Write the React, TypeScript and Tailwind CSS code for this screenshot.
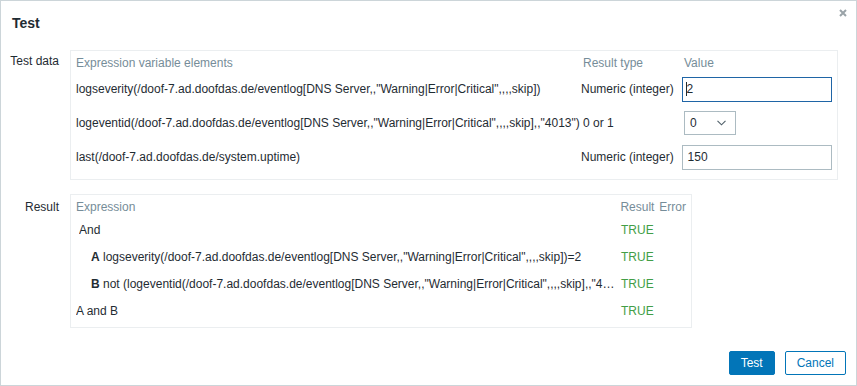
import React from "react";

const font = { fontFamily: '"Liberation Sans", Arial, sans-serif' };

const vars = [
  {
    expr: 'logseverity(/doof-7.ad.doofdas.de/eventlog[DNS Server,,"Warning|Error|Critical",,,,skip])',
    type: "Numeric (integer)",
    kind: "input",
    value: "2",
    focused: true,
  },
  {
    expr: 'logeventid(/doof-7.ad.doofdas.de/eventlog[DNS Server,,"Warning|Error|Critical",,,,skip],,"4013")',
    type: "0 or 1",
    kind: "select",
    value: "0",
  },
  {
    expr: "last(/doof-7.ad.doofdas.de/system.uptime)",
    type: "Numeric (integer)",
    kind: "input",
    value: "150",
  },
];

function Chevron() {
  return (
    <svg width="9" height="6" viewBox="0 0 9 6" fill="none">
      <path d="M0.5 0.8 L4.5 4.8 L8.5 0.8" stroke="#4f5f69" strokeWidth="1.1" />
    </svg>
  );
}

function ValueField({ row }: { row: (typeof vars)[number] }) {
  if (row.kind === "select") {
    return (
      <div className="flex h-[24px] w-[52px] items-center justify-between border border-[#acbbc2] bg-white pl-[5px] pr-[9px] text-[#1f2c33]">
        <span>{row.value}</span>
        <Chevron />
      </div>
    );
  }
  return (
    <div
      className={
        row.focused
          ? "flex h-[25px] w-[151px] items-center border border-[#1f65a6] bg-white pl-[3px] text-[#1f2c33]"
          : "flex h-[25px] w-[151px] items-center border border-[#acbbc2] bg-white pl-[5px] text-[#1f2c33]"
      }
    >
      {row.focused && <span className="inline-block h-[14px] w-px bg-[#1f2c33]" />}
      <span>{row.value}</span>
    </div>
  );
}

const results = [
  { lead: "", text: "And", indent: "pl-[3px]" },
  {
    lead: "A",
    text: ' logseverity(/doof-7.ad.doofdas.de/eventlog[DNS Server,,"Warning|Error|Critical",,,,skip])=2',
    indent: "pl-[15px]",
  },
  {
    lead: "B",
    text: ' not (logeventid(/doof-7.ad.doofdas.de/eventlog[DNS Server,,"Warning|Error|Critical",,,,skip],,"4013")=0)',
    indent: "pl-[15px]",
  },
  { lead: "", text: "A and B", indent: "" },
];

export default function App() {
  return (
    <div
      style={font}
      className="relative flex h-[386px] w-[857px] flex-col border border-[#ccd5d9] bg-white text-[12px] leading-[14px] text-[#1f2c33]"
    >
      {/* header */}
      <div className="h-[49px] pl-[11px] pt-[14px] text-[14px] font-bold leading-[16px] text-[#1f2c33]">
        Test
      </div>
      <button className="absolute right-[9px] top-[8px] flex h-[8px] w-[8px] items-center justify-center">
        <svg width="8" height="8" viewBox="0 0 8 8">
          <path d="M1 1 L7 7 M7 1 L1 7" stroke="#9aa3a8" strokeWidth="2" />
        </svg>
      </button>

      {/* Test data */}
      <div className="flex">
        <div className="w-[58px] whitespace-nowrap pt-[4px] text-right">Test data</div>
        <div className="ml-[11px] w-[768px] border border-[#ebeef0] px-[5px] pb-[5px] pt-[5px]">
          <div className="flex h-[16px] text-[#768d99]">
            <div className="w-[507px]">Expression variable elements</div>
            <div className="w-[101px]">Result type</div>
            <div>Value</div>
          </div>
          {vars.map((row, i) => (
            <div key={i} className="flex h-[34px] items-center">
              <div className="w-[507px] whitespace-nowrap">{row.expr}</div>
              <div className="w-[101px] whitespace-nowrap">{row.type}</div>
              <ValueField row={row} />
            </div>
          ))}
        </div>
      </div>

      {/* Result */}
      <div className="mt-[14px] flex">
        <div className="w-[58px] pt-[6px] text-right">Result</div>
        <div className="ml-[11px] w-[622px] border border-[#ebeef0] px-[5px] pb-[3px] pt-[5px]">
          <div className="flex h-[16px] text-[#768d99]">
            <div className="w-[545px]">Expression</div>
            <div className="w-[39px]">Result</div>
            <div>Error</div>
          </div>
          {results.map((r, i) => (
            <div key={i} className="flex h-[27px] items-center">
              <div className={`w-[545px] pr-[5px] ${r.indent}`}>
                <div className="truncate whitespace-nowrap">
                  {r.lead && <span className="font-bold">{r.lead}</span>}
                  {r.text}
                </div>
              </div>
              <div className="w-[39px] text-[#429e47]">TRUE</div>
              <div />
            </div>
          ))}
        </div>
      </div>

      {/* footer */}
      <div className="mt-auto flex justify-end gap-[10px] pb-[10px] pr-[10px]">
        <button className="h-[24px] rounded-[2px] border border-[#0275b8] bg-[#0275b8] px-[11px] text-white">
          Test
        </button>
        <button className="h-[24px] rounded-[2px] border border-[#0275b8] bg-white px-[11px] text-[#0275b8]">
          Cancel
        </button>
      </div>
    </div>
  );
}
